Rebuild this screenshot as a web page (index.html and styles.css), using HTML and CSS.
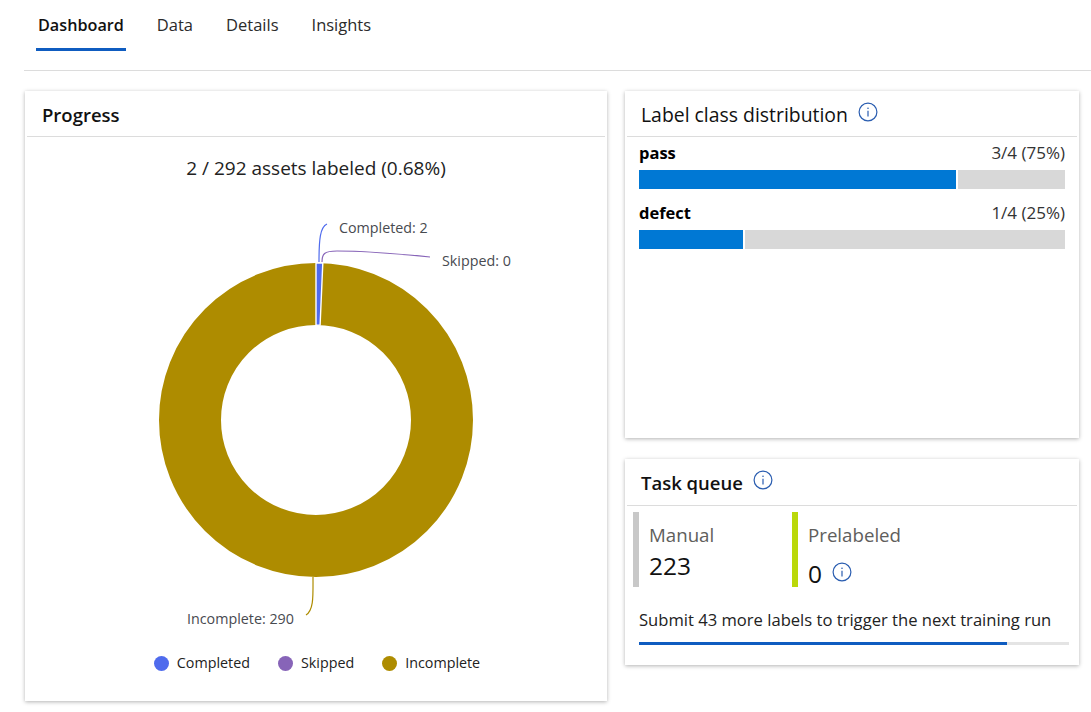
FILE: index.html
```html
<!DOCTYPE html>
<html lang="en">
<head>
    <meta charset="UTF-8">
    <meta name="viewport" content="width=device-width, initial-scale=1.0">
    <title>Dashboard</title>
    <link rel="stylesheet" href="styles.css">
</head>
<body>

<!-- Info icon, reused in the card headers -->
<svg class="icon-defs" width="0" height="0">
    <symbol id="infoIcon" viewBox="0 0 20 20">
        <circle cx="10" cy="10" r="8.9" fill="none" stroke="currentColor" stroke-width="1.2"/>
        <path d="M10 8.8V14.4" fill="none" stroke="currentColor" stroke-width="1.2"/>
        <circle cx="10" cy="6.3" r="0.8" fill="currentColor"/>
    </symbol>
</svg>

<!-- Tabs -->
<nav class="tabs">
    <a class="tab tab-active">Dashboard</a>
    <a class="tab">Data</a>
    <a class="tab">Details</a>
    <a class="tab">Insights</a>
</nav>

<main class="dashboard">

    <!-- Progress -->
    <section class="card progress-card">
        <header class="card-header"><h2>Progress</h2></header>
        <p class="progress-summary">2 / 292 assets labeled (0.68%)</p>
        <svg class="donut" viewBox="25 190 582 450" width="582" height="450">
            <circle cx="316" cy="420" r="126" fill="none" stroke="#ae8c00" stroke-width="62"/>
            <path d="M316 263 L322.8 263.1 L320.1 325.1 L316 325 Z" fill="#4f6bed" stroke="#fff" stroke-width="1.4"/>
            <path d="M319 262 C319 240 320 227 327 224" fill="none" stroke="#4f6bed" stroke-width="1.2"/>
            <path d="M322 262 C322 254 324 251 337 251 C365 251 400 254 430 257" fill="none" stroke="#8764b8" stroke-width="1.2"/>
            <path d="M313 577 C313 595 314 610 306 615" fill="none" stroke="#ae8c00" stroke-width="1.2"/>
            <text class="donut-label" x="339" y="233">Completed: 2</text>
            <text class="donut-label" x="442" y="266">Skipped: 0</text>
            <text class="donut-label" x="187" y="624">Incomplete: 290</text>
        </svg>
        <ul class="legend">
            <li class="legend-item"><span class="legend-dot dot-completed"></span>Completed</li>
            <li class="legend-item"><span class="legend-dot dot-skipped"></span>Skipped</li>
            <li class="legend-item"><span class="legend-dot dot-incomplete"></span>Incomplete</li>
        </ul>
    </section>

    <!-- Label class distribution -->
    <section class="card label-card">
        <header class="card-header">
            <h2 class="title-regular">Label class distribution</h2>
            <svg class="info-icon"><use href="#infoIcon"/></svg>
        </header>
        <div class="label-list">
            <div class="label-row">
                <div class="label-text"><strong>pass</strong><span>3/4 (75%)</span></div>
                <div class="label-bar">
                    <div class="label-fill" style="width: 317px"></div>
                    <div class="label-rest"></div>
                </div>
            </div>
            <div class="label-row">
                <div class="label-text"><strong>defect</strong><span>1/4 (25%)</span></div>
                <div class="label-bar">
                    <div class="label-fill" style="width: 104px"></div>
                    <div class="label-rest"></div>
                </div>
            </div>
        </div>
    </section>

    <!-- Task queue -->
    <section class="card queue-card">
        <header class="card-header">
            <h2>Task queue</h2>
            <svg class="info-icon"><use href="#infoIcon"/></svg>
        </header>
        <div class="queue-stats">
            <div class="stat stat-manual">
                <div class="stat-name">Manual</div>
                <div class="stat-value">223</div>
            </div>
            <div class="stat stat-prelabeled">
                <div class="stat-name">Prelabeled</div>
                <div class="stat-value stat-value-low">0 <svg class="info-icon"><use href="#infoIcon"/></svg></div>
            </div>
        </div>
        <p class="queue-note">Submit 43 more labels to trigger the next training run</p>
        <div class="queue-track">
            <div class="queue-fill" style="width: 368px"></div>
        </div>
    </section>

</main>

</body>
</html>
```

FILE: styles.css
```css
body {
    margin: 0;
    background-color: #fff;
    color: #111;
    font-family: "Open Sans", "Noto Sans", sans-serif;
}

.icon-defs {
    display: block;
    height: 0;
}

/* Tabs */
.tabs {
    display: flex;
    height: 70px;
    margin-left: 24px;
    padding-left: 12px;
    border-bottom: 1px solid #dcdcdc;
}

.tab {
    box-sizing: border-box;
    height: 51px;
    margin-right: 29px;
    padding: 13px 2px 0;
    font-size: 16.5px;
    line-height: 24px;
    color: #2b2b2b;
}

.tab-active {
    font-size: 16.2px;
    font-weight: 600;
    color: #111;
    border-bottom: 3px solid #0f5cc0;
}

/* Layout */
.dashboard {
    display: grid;
    grid-template-columns: 582px 454px;
    grid-template-rows: 347px 242px;
    column-gap: 18px;
    row-gap: 21px;
    margin: 20px 0 0 25px;
    padding-bottom: 11px;
}

.card {
    background-color: #fff;
    box-shadow: 0 1px 4px rgba(0, 0, 0, 0.3);
}

.progress-card {
    grid-row: 1 / span 2;
}

.queue-card {
    align-self: start;
    height: 206px;
}

.card-header {
    display: flex;
    align-items: center;
    box-sizing: border-box;
    height: 46px;
    margin: 0 2px;
    padding: 2px 0 0 15px;
    border-bottom: 1px solid #dcdcdc;
}

.label-card .card-header,
.queue-card .card-header {
    padding-left: 14px;
}

.queue-card .card-header {
    height: 47px;
}

.card-header h2 {
    margin: 0;
    font-size: 18.5px;
    font-weight: 600;
    line-height: 24px;
}

.card-header .title-regular {
    font-size: 19.4px;
    font-weight: 500;
}

.info-icon {
    width: 20px;
    height: 20px;
    margin: -6px 0 0 10px;
    color: #2a5db0;
}

/* Progress */
.progress-summary {
    margin: 0;
    padding-top: 19px;
    height: 34px;
    font-size: 19px;
    line-height: 24px;
    text-align: center;
    color: #222;
}

.donut {
    display: block;
}

.donut-label {
    font-size: 14.3px;
    fill: #484a50;
}

.legend {
    display: flex;
    justify-content: center;
    gap: 28px;
    margin: 13px 0 0;
    padding: 0 0 0 2px;
    list-style: none;
    font-size: 14.3px;
    line-height: 20px;
    color: #222;
}

.legend-item {
    display: flex;
    align-items: center;
    gap: 8px;
}

.legend-dot {
    width: 15px;
    height: 15px;
    border-radius: 50%;
}

.dot-completed {
    background-color: #4f6bed;
}

.dot-skipped {
    background-color: #8764b8;
}

.dot-incomplete {
    background-color: #ae8c00;
}

/* Label class distribution */
.label-list {
    padding: 6px 14px 0;
}

.label-row {
    margin-bottom: 14px;
}

.label-text {
    display: flex;
    justify-content: space-between;
    height: 23px;
    font-size: 16.5px;
    line-height: 20px;
    color: #333;
}

.label-text span {
    font-size: 17px;
}

.label-text strong {
    color: #000;
}

.label-bar {
    display: flex;
    gap: 2px;
    height: 19px;
    margin-top: 4px;
}

.label-fill {
    background-color: #0078d4;
}

.label-rest {
    flex: 1;
    background-color: #d8d8d8;
}

/* Task queue */
.queue-stats {
    display: flex;
    margin: 6px 0 0 8px;
}

.stat {
    box-sizing: border-box;
    height: 75px;
    width: 159px;
    padding-left: 10px;
    border-left: 6px solid #c8c8c8;
}

.stat-prelabeled {
    border-left-color: #bad80a;
}

.stat-name {
    padding-top: 11px;
    font-size: 18.7px;
    line-height: 24px;
    color: #605e5c;
}

.stat-value {
    margin-top: 3px;
    font-size: 24.5px;
    line-height: 32px;
    font-weight: 500;
    color: #111;
}

.stat-value-low {
    display: flex;
    align-items: center;
    margin-top: 11px;
}

.stat-value-low .info-icon {
    margin: -4px 0 0 10px;
}

.queue-note {
    margin: 21px 14px 0;
    font-size: 16.6px;
    line-height: 24px;
    color: #222;
}

.queue-track {
    height: 3px;
    margin: 10px 10px 0 14px;
    background-color: #e4e4e4;
}

.queue-fill {
    height: 3px;
    background-color: #0f5cc0;
}
```
